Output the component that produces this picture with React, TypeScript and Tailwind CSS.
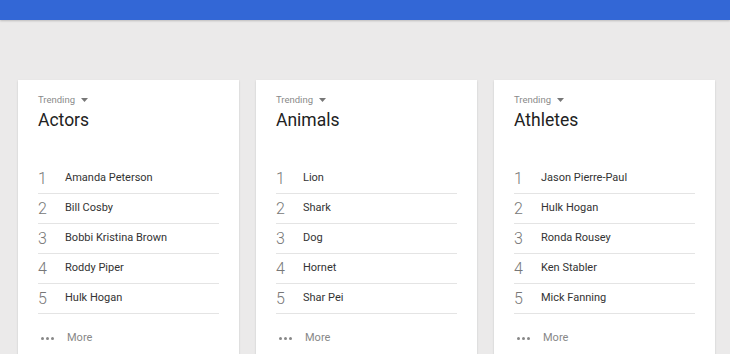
import React from 'react'

interface TrendCard {
  title: string
  items: string[]
}

const CARDS: TrendCard[] = [
  {
    title: 'Actors',
    items: ['Amanda Peterson', 'Bill Cosby', 'Bobbi Kristina Brown', 'Roddy Piper', 'Hulk Hogan'],
  },
  {
    title: 'Animals',
    items: ['Lion', 'Shark', 'Dog', 'Hornet', 'Shar Pei'],
  },
  {
    title: 'Athletes',
    items: ['Jason Pierre-Paul', 'Hulk Hogan', 'Ronda Rousey', 'Ken Stabler', 'Mick Fanning'],
  },
]

function Card({ card }: { card: TrendCard }) {
  return (
    <div className="w-[221px] bg-white shadow-[0_1px_2px_rgba(0,0,0,0.15)] pt-[14px] px-[20px]">
      <div className="flex items-center h-[12px] text-[9.5px] text-[#8a8a8a]">
        <span>Trending</span>
        <svg className="ml-[6px]" width="7" height="4" viewBox="0 0 7 4">
          <path d="M0 0h7L3.5 4z" fill="#777" />
        </svg>
      </div>
      <div className="mt-[2px] h-[25px] leading-[25px] text-[17.5px] text-[#222]">{card.title}</div>
      <div className="mt-[31px]">
        {card.items.map((name, i) => (
          <div key={i} className="flex items-center h-[30px] border-b border-[#e4e4e4]">
            <span className="w-[27px] text-[16px] font-light text-[#777]">{i + 1}</span>
            <span className="text-[11px] text-[#333]">{name}</span>
          </div>
        ))}
        <div className="flex items-center h-[48px] text-[11px] text-[#888]">
          <span className="w-[29px] pl-[3px] flex gap-[2px]">
            <i className="block w-[3px] h-[3px] rounded-full bg-[#888]" />
            <i className="block w-[3px] h-[3px] rounded-full bg-[#888]" />
            <i className="block w-[3px] h-[3px] rounded-full bg-[#888]" />
          </span>
          <span>More</span>
        </div>
      </div>
    </div>
  )
}

export default function App() {
  return (
    <div className="min-h-[354px] h-[354px] overflow-hidden bg-[#ebeaea] font-['Roboto',sans-serif]">
      <div className="h-[20px] bg-[#3367d6] shadow-[0_1px_2px_rgba(0,0,0,0.2)]" />
      <div className="flex gap-[17px] pl-[18px] pt-[60px]">
        {CARDS.map((c) => (
          <Card key={c.title} card={c} />
        ))}
      </div>
    </div>
  )
}
